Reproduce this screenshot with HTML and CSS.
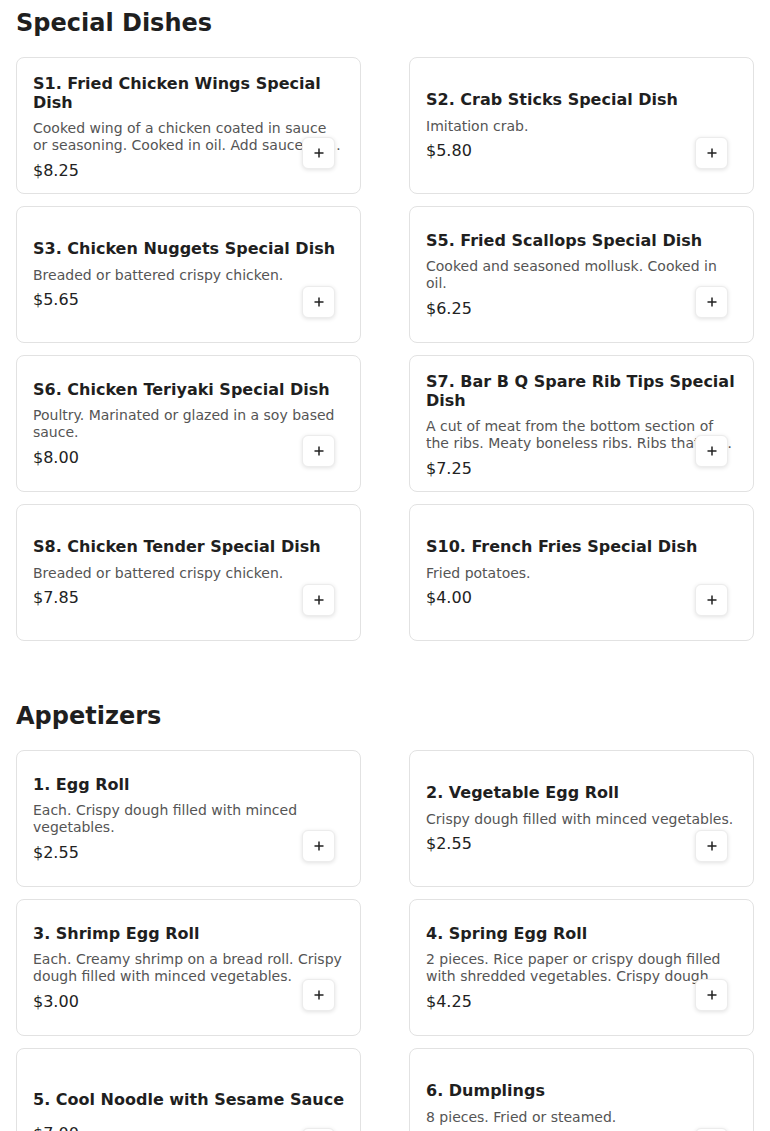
FILE: index.html
```html
<!DOCTYPE html>
<html lang="en">
<head>
<meta charset="utf-8">
<title>Menu</title>
<link rel="stylesheet" href="styles.css">
</head>
<body>
<main class="menu">
  <section class="section">
    <h2 class="section-title">Special Dishes</h2>
    <div class="grid">
      <div class="card"><div class="info"><h3 class="name">S1. Fried Chicken Wings Special Dish</h3><p class="desc">Cooked wing of a chicken coated in sauce or seasoning. Cooked in oil. Add sauce for an additional charge.</p><div class="price">$8.25</div></div><button class="add"><svg viewBox="0 0 10 10" width="10" height="10"><path d="M5 0.5V9.5M0.5 5H9.5" stroke="#222" stroke-width="1.5"/></svg></button></div>
      <div class="card"><div class="info"><h3 class="name">S2. Crab Sticks Special Dish</h3><p class="desc">Imitation crab.</p><div class="price">$5.80</div></div><button class="add"><svg viewBox="0 0 10 10" width="10" height="10"><path d="M5 0.5V9.5M0.5 5H9.5" stroke="#222" stroke-width="1.5"/></svg></button></div>
      <div class="card"><div class="info"><h3 class="name">S3. Chicken Nuggets Special Dish</h3><p class="desc">Breaded or battered crispy chicken.</p><div class="price">$5.65</div></div><button class="add"><svg viewBox="0 0 10 10" width="10" height="10"><path d="M5 0.5V9.5M0.5 5H9.5" stroke="#222" stroke-width="1.5"/></svg></button></div>
      <div class="card"><div class="info"><h3 class="name">S5. Fried Scallops Special Dish</h3><p class="desc">Cooked and seasoned mollusk. Cooked in oil.</p><div class="price">$6.25</div></div><button class="add"><svg viewBox="0 0 10 10" width="10" height="10"><path d="M5 0.5V9.5M0.5 5H9.5" stroke="#222" stroke-width="1.5"/></svg></button></div>
      <div class="card"><div class="info"><h3 class="name">S6. Chicken Teriyaki Special Dish</h3><p class="desc">Poultry. Marinated or glazed in a soy based sauce.</p><div class="price">$8.00</div></div><button class="add"><svg viewBox="0 0 10 10" width="10" height="10"><path d="M5 0.5V9.5M0.5 5H9.5" stroke="#222" stroke-width="1.5"/></svg></button></div>
      <div class="card"><div class="info"><h3 class="name">S7. Bar B Q Spare Rib Tips Special Dish</h3><p class="desc">A cut of meat from the bottom section of the ribs. Meaty boneless ribs. Ribs that are tender and juicy.</p><div class="price">$7.25</div></div><button class="add"><svg viewBox="0 0 10 10" width="10" height="10"><path d="M5 0.5V9.5M0.5 5H9.5" stroke="#222" stroke-width="1.5"/></svg></button></div>
      <div class="card"><div class="info"><h3 class="name">S8. Chicken Tender Special Dish</h3><p class="desc">Breaded or battered crispy chicken.</p><div class="price">$7.85</div></div><button class="add"><svg viewBox="0 0 10 10" width="10" height="10"><path d="M5 0.5V9.5M0.5 5H9.5" stroke="#222" stroke-width="1.5"/></svg></button></div>
      <div class="card"><div class="info"><h3 class="name">S10. French Fries Special Dish</h3><p class="desc">Fried potatoes.</p><div class="price">$4.00</div></div><button class="add"><svg viewBox="0 0 10 10" width="10" height="10"><path d="M5 0.5V9.5M0.5 5H9.5" stroke="#222" stroke-width="1.5"/></svg></button></div>
    </div>
  </section>
  <section class="section">
    <h2 class="section-title">Appetizers</h2>
    <div class="grid">
      <div class="card"><div class="info"><h3 class="name">1. Egg Roll</h3><p class="desc">Each. Crispy dough filled with minced vegetables.</p><div class="price">$2.55</div></div><button class="add"><svg viewBox="0 0 10 10" width="10" height="10"><path d="M5 0.5V9.5M0.5 5H9.5" stroke="#222" stroke-width="1.5"/></svg></button></div>
      <div class="card"><div class="info"><h3 class="name">2. Vegetable Egg Roll</h3><p class="desc">Crispy dough filled with minced vegetables.</p><div class="price">$2.55</div></div><button class="add"><svg viewBox="0 0 10 10" width="10" height="10"><path d="M5 0.5V9.5M0.5 5H9.5" stroke="#222" stroke-width="1.5"/></svg></button></div>
      <div class="card"><div class="info"><h3 class="name">3. Shrimp Egg Roll</h3><p class="desc">Each. Creamy shrimp on a bread roll. Crispy dough filled with minced vegetables.</p><div class="price">$3.00</div></div><button class="add"><svg viewBox="0 0 10 10" width="10" height="10"><path d="M5 0.5V9.5M0.5 5H9.5" stroke="#222" stroke-width="1.5"/></svg></button></div>
      <div class="card"><div class="info"><h3 class="name">4. Spring Egg Roll</h3><p class="desc">2 pieces. Rice paper or crispy dough filled with shredded vegetables. Crispy dough filled with minced vegetables.</p><div class="price">$4.25</div></div><button class="add"><svg viewBox="0 0 10 10" width="10" height="10"><path d="M5 0.5V9.5M0.5 5H9.5" stroke="#222" stroke-width="1.5"/></svg></button></div>
      <div class="card"><div class="info"><h3 class="name">5. Cool Noodle with Sesame Sauce</h3><p class="desc"></p><div class="price">$7.00</div></div><button class="add"><svg viewBox="0 0 10 10" width="10" height="10"><path d="M5 0.5V9.5M0.5 5H9.5" stroke="#222" stroke-width="1.5"/></svg></button></div>
      <div class="card"><div class="info"><h3 class="name">6. Dumplings</h3><p class="desc">8 pieces. Fried or steamed.</p><div class="price">$7.50</div></div><button class="add"><svg viewBox="0 0 10 10" width="10" height="10"><path d="M5 0.5V9.5M0.5 5H9.5" stroke="#222" stroke-width="1.5"/></svg></button></div>
    </div>
  </section>
</main>
</body>
</html>
```
FILE: styles.css
```css
html, body {
  margin: 0;
  padding: 0;
  background: #ffffff;
}
body {
  font-family: "DejaVu Sans", sans-serif;
  color: #1f1f1f;
}
.menu {
  padding: 9px 16px 40px;
}
.section + .section {
  margin-top: 61px;
}
.section-title {
  margin: 0 0 20px;
  font-size: 24px;
  line-height: 28px;
  font-weight: 700;
  color: #1f1f1f;
}
.grid {
  display: grid;
  grid-template-columns: 1fr 1fr;
  column-gap: 48px;
  row-gap: 12px;
}
.card {
  position: relative;
  box-sizing: border-box;
  height: 137px;
  padding: 16px;
  border: 1px solid #e2e2e2;
  border-radius: 8px;
  background: #fff;
  display: flex;
  flex-direction: column;
}
.info {
  margin: auto 0;
}
.name {
  margin: 0 0 8px;
  font-size: 16px;
  line-height: 19.2px;
  font-weight: 700;
  color: #1f1f1f;
}
.desc {
  margin: 0 0 7px;
  font-size: 14px;
  line-height: 16.8px;
  color: #555555;
  display: -webkit-box;
  -webkit-line-clamp: 2;
  -webkit-box-orient: vertical;
  overflow: hidden;
}
.price {
  font-size: 16px;
  line-height: 19.2px;
  color: #222222;
}
.add {
  position: absolute;
  right: 25px;
  bottom: 24px;
  box-sizing: border-box;
  width: 33px;
  height: 32px;
  padding: 0;
  border: 1px solid #ececec;
  border-radius: 6px;
  background: #ffffff;
  box-shadow: 0 1px 4px rgba(0, 0, 0, 0.12);
  display: flex;
  align-items: center;
  justify-content: center;
  cursor: pointer;
}
.add svg {
  display: block;
}
```
